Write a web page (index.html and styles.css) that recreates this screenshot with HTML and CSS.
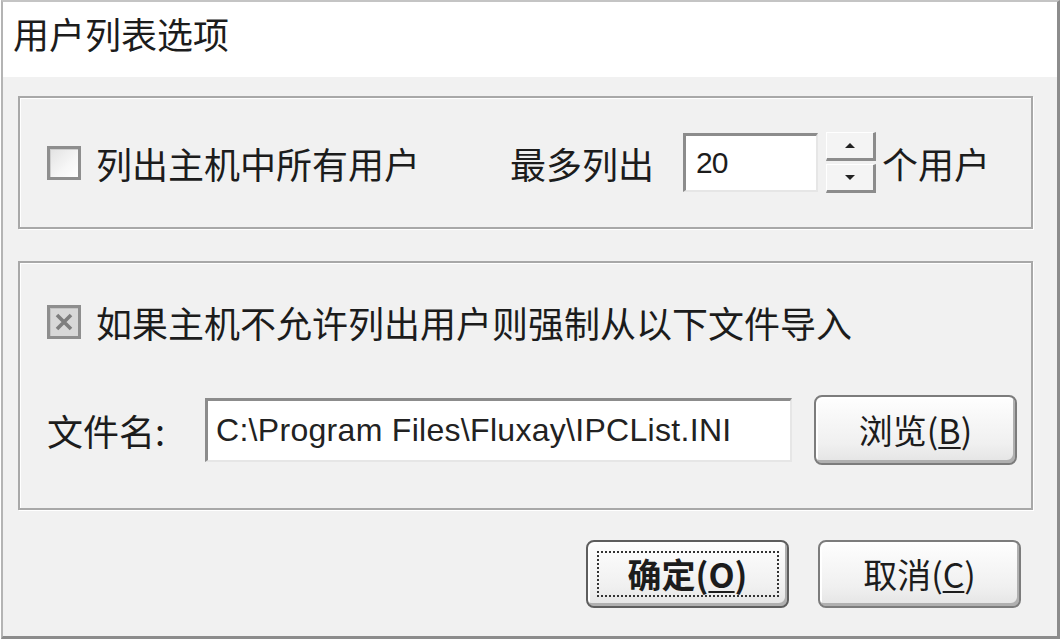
FILE: index.html
```html
<!DOCTYPE html>
<html lang="zh-CN">
<head>
<meta charset="utf-8">
<title>用户列表选项</title>
<link rel="stylesheet" href="styles.css">
</head>
<body>
<div class="dialog">
  <div class="titlebar"><span class="title">用户列表选项</span></div>
  <div class="content">
    <div class="group group-top">
      <div class="row">
        <span class="checkbox"></span>
        <span class="label check-label">列出主机中所有用户</span>
        <span class="label most">最多列出</span>
        <span class="textbox num">20</span>
        <span class="spinner">
          <span class="spin spin-up"><span class="arrow-up"></span></span>
          <span class="spin spin-down"><span class="arrow-down"></span></span>
        </span>
        <span class="label unit">个用户</span>
      </div>
    </div>
    <div class="group group-bottom">
      <div class="row">
        <span class="checkbox checked">
          <svg viewBox="0 0 28 28" width="28" height="28"><path d="M7 7 L21 21 M21 7 L7 21" stroke="#7e7e7e" stroke-width="3.6" fill="none"/></svg>
        </span>
        <span class="label check-label">如果主机不允许列出用户则强制从以下文件导入</span>
      </div>
      <div class="row file-row">
        <span class="label file-label">文件名:</span>
        <span class="textbox path">C:\Program Files\Fluxay\IPCList.INI</span>
        <button class="btn browse">浏览(<u>B</u>)</button>
      </div>
    </div>
    <div class="actions">
      <button class="btn ok"><span class="focus">确定(<u>O</u>)</span></button>
      <button class="btn cancel">取消(<u>C</u>)</button>
    </div>
  </div>
</div>
</body>
</html>
```

FILE: styles.css
```css
* { box-sizing: border-box; }
html, body { margin: 0; padding: 0; background: #ffffff; }
body {
  font-family: "Noto Sans CJK SC", "Noto Sans", sans-serif;
  color: #1c1c1c;
  width: 1062px;
  height: 642px;
  overflow: hidden;
}
.dialog {
  margin-left: 1px;
  width: 1059px;
  height: 639px;
  border-left: 2px solid #b4b4b4;
  border-top: 2px solid #c4c4c4;
  border-right: 3px solid #8c8c8c;
  border-bottom: 3px solid #8c8c8c;
  display: flex;
  flex-direction: column;
  background: #f1f1f1;
}
.titlebar {
  height: 75px;
  background: #ffffff;
  padding: 13px 0 0 10px;
  flex: none;
}
.title { font-size: 36px; line-height: 1; display: block; }
.content {
  flex: 1;
  padding: 19px 24px 0 15px;
  display: flex;
  flex-direction: column;
}
.group {
  border: 2px solid #a8a8a8;
  box-shadow: inset 1px 1px 0 #ffffff, 1px 1px 0 #ffffff;
  padding-left: 27px;
}
.group-top {
  height: 133px;
  display: flex;
  align-items: center;
}
.group-bottom {
  height: 249px;
  margin-top: 32px;
  padding-top: 41px;
}
.row { display: flex; align-items: center; height: 36px; }
.label { font-size: 36px; line-height: 1; white-space: nowrap; }
.check-label { margin-left: 15px; }
.most { margin-left: 90px; }
.unit { margin-left: 6px; }
.checkbox {
  width: 34px;
  height: 34px;
  flex: none;
  border: 3px solid #8e8e8e;
  background: linear-gradient(135deg, #e2e2e2 0%, #f6f6f6 60%, #ffffff 100%);
  box-shadow: inset 1px 1px 0 #cfcfcf;
  display: flex;
  align-items: center;
  justify-content: center;
}
.checkbox.checked { background: #d8d8d8; box-shadow: inset 1px 1px 0 #c4c4c4; }
.textbox {
  background: #ffffff;
  border-top: 3px solid #8c8c8c;
  border-left: 3px solid #8c8c8c;
  border-right: 2px solid #e6e6e6;
  border-bottom: 2px solid #e6e6e6;
  font-family: "Liberation Sans", "DejaVu Sans", sans-serif;
  display: flex;
  align-items: center;
  white-space: nowrap;
  flex: none;
}
.num {
  margin-left: 29px;
  width: 135px;
  height: 59px;
  font-size: 30px;
  padding-left: 10px;
  letter-spacing: -1px;
}
.spinner {
  margin-left: 8px;
  width: 50px;
  height: 61px;
  display: flex;
  flex-direction: column;
  justify-content: space-between;
  flex: none;
}
.spin {
  height: 29px;
  background: #f4f4f4;
  border-right: 3px solid #8c8c8c;
  border-bottom: 3px solid #8c8c8c;
  border-top: 1px solid #ffffff;
  border-left: 1px solid #ffffff;
  display: flex;
  align-items: center;
  justify-content: center;
}
.arrow-up, .arrow-down { width: 0; height: 0; border-left: 5px solid transparent; border-right: 5px solid transparent; }
.arrow-up { border-bottom: 5px solid #222; }
.arrow-down { border-top: 5px solid #222; }
.file-row { margin-top: 55px; height: 70px; }
.file-label { width: 158px; flex: none; }
.path {
  width: 587px;
  height: 64px;
  font-size: 32px;
  padding-left: 8px;
  letter-spacing: 0.3px;
  color: #222;
}
.btn {
  font-family: "Noto Sans CJK SC", "Noto Sans", sans-serif;
  font-size: 34px;
  line-height: 1;
  color: #1c1c1c;
  width: 203px;
  height: 70px;
  padding: 0;
  border: 2px solid #7c7c7c;
  border-radius: 8px;
  background: linear-gradient(#fefefe, #f0f0f0 70%, #e4e4e4);
  box-shadow: inset -2px -3px 0 #b0b0b0, inset 2px 2px 0 #ffffff;
  display: flex;
  align-items: center;
  justify-content: center;
  flex: none;
}
.btn u { text-decoration-thickness: 2px; text-underline-offset: 3px; }
.browse { margin-left: 22px; }
.actions {
  margin-top: 30px;
  margin-right: 12px;
  display: flex;
  justify-content: flex-end;
  gap: 29px;
}
.actions .btn { height: 68px; }
.ok { font-weight: 700; border-color: #5e5e5e; }
.focus {
  width: 182px;
  height: 46px;
  border: 2px dotted #333;
  display: flex;
  align-items: center;
  justify-content: center;
}
```
